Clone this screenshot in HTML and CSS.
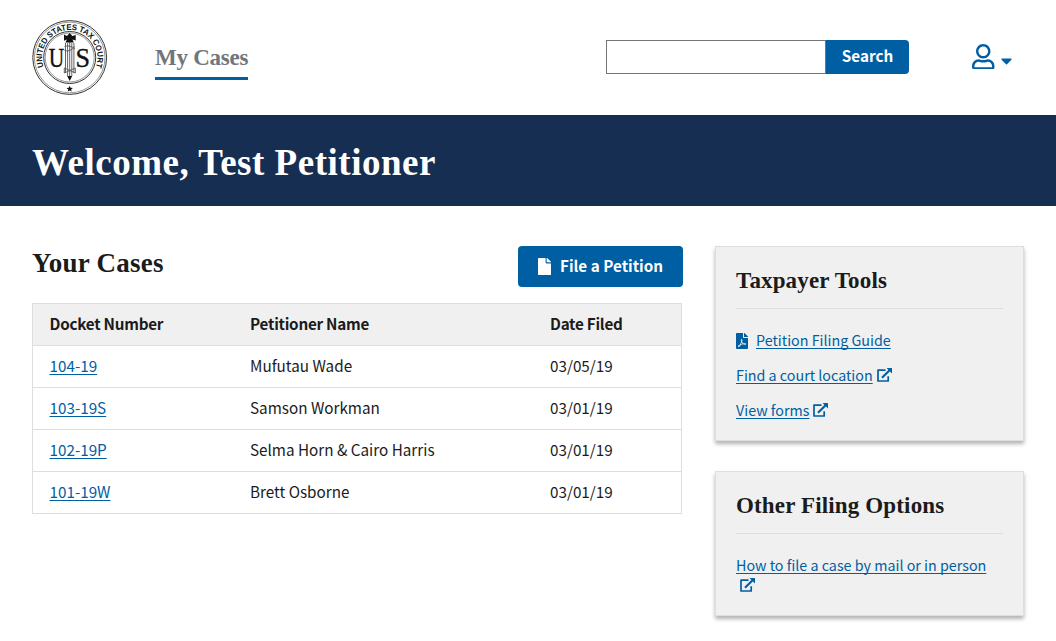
FILE: index.html
```html
<!DOCTYPE html>
<html lang="en">
<head>
<meta charset="utf-8">
<title>My Cases</title>
<link rel="stylesheet" href="styles.css">
</head>
<body>
<svg class="symbols" aria-hidden="true">
  <symbol id="external" viewBox="0 0 15 14">
    <path d="M8.500 2.200H1V13H11.200V8.300" fill="none" stroke="currentColor" stroke-width="1.700" stroke-linejoin="round"/>
    <path d="M5 9.800L12.600 2.200" fill="none" stroke="currentColor" stroke-width="2.100"/>
    <path d="M9.600 0H14.400Q15 0 15 .6V5.400Z" fill="currentColor"/>
  </symbol>
</svg>
<header class="header">
  <svg class="seal" viewBox="0 0 76 76" role="img" aria-label="United States Tax Court">
    <defs><path id="ring" d="M13.200 50.500A27.700 27.700 0 1 1 62.200 50.500"/></defs>
    <circle cx="37.700" cy="37.500" r="36.900" class="line"/>
    <circle cx="37.700" cy="37.500" r="35.300" class="line thin"/>
    <circle cx="37.700" cy="37.500" r="26" class="line"/>
    <circle cx="37.700" cy="37.500" r="24.500" class="line thin"/>
    <text class="motto"><textPath href="#ring" startOffset="4" textLength="106" lengthAdjust="spacingAndGlyphs">UNITED STATES TAX COURT</textPath></text>
    <text class="letter" x="16.800" y="47.200" textLength="15.500" lengthAdjust="spacingAndGlyphs">U</text>
    <text class="letter" x="43.400" y="47.200" textLength="14.500" lengthAdjust="spacingAndGlyphs">S</text>
    <path d="M33.500 23v30M35.600 23v33M37.700 20v39M39.800 23v33M41.900 23v30" class="rods"/>
    <path d="M32.500 26.500q5.200-2 10.400 2.500M42.900 26.500q-5.200 6-10.400 4M32.300 48l11 5M43.300 48l-11 5M32.300 48v5M43.300 48v5" class="rods"/>
    <path d="M32 14.500l3 1.500 2.700-3 2.700 3 3.300-1v5.500l-3.300-1 1.500 3h-8.500l1.500-3-2.900 1.200zM35.200 56h5l-2.500 5z"/>
    <path d="M37.700 65.700l.9 2.100 2.300.1-1.800 1.500.6 2.200-2-1.200-2 1.200.6-2.200-1.800-1.500 2.300-.1z"/>
  </svg>
  <nav class="nav"><a class="nav-link" href="#">My Cases</a></nav>
  <form class="search">
    <input class="search-input" type="text" aria-label="Search">
    <button class="search-button" type="button">Search</button>
  </form>
  <div class="account">
    <svg class="user" viewBox="0 0 448 512"><path d="M313.600 304c-28.700 0-42.500 16-89.600 16-47.100 0-60.800-16-89.600-16C60.200 304 0 364.200 0 438.400V464c0 26.500 21.500 48 48 48h352c26.500 0 48-21.500 48-48v-25.600c0-74.200-60.200-134.400-134.400-134.400zM400 464H48v-25.600c0-47.600 38.800-86.400 86.400-86.400 14.600 0 38.300 16 89.600 16 51.700 0 74.900-16 89.600-16 47.600 0 86.400 38.800 86.400 86.400V464zM224 288c79.500 0 144-64.500 144-144S303.500 0 224 0 80 64.500 80 144s64.500 144 144 144zm0-240c52.900 0 96 43.100 96 96s-43.100 96-96 96-96-43.100-96-96 43.100-96 96-96z"/></svg>
    <svg class="caret" viewBox="0 0 320 512"><path d="M31.300 192h257.300c17.800 0 26.700 21.500 14.100 34.100L174.100 354.800c-7.800 7.800-20.500 7.800-28.300 0L17.200 226.100C4.600 213.500 13.500 192 31.300 192z"/></svg>
  </div>
</header>
<div class="banner"><h1 class="banner-title">Welcome, Test Petitioner</h1></div>
<div class="content">
  <main class="main">
    <div class="main-head">
      <h2 class="main-title">Your Cases</h2>
      <button class="file-button" type="button">
        <svg class="file-icon" viewBox="0 0 384 512"><path d="M224 136V0H24C10.700 0 0 10.700 0 24v464c0 13.300 10.700 24 24 24h336c13.300 0 24-10.700 24-24V160H248c-13.200 0-24-10.800-24-24zm160-14.100v6.100H256V0h6.100c6.400 0 12.500 2.500 17 7l97.900 98c4.500 4.500 7 10.600 7 16.900z"/></svg>
        <span class="file-label">File a Petition</span>
      </button>
    </div>
    <table class="cases">
      <thead><tr><th class="docket">Docket Number</th><th class="name">Petitioner Name</th><th>Date Filed</th></tr></thead>
      <tbody>
        <tr><td><a class="link" href="#">104-19</a></td><td>Mufutau Wade</td><td>03/05/19</td></tr>
        <tr><td><a class="link" href="#">103-19S</a></td><td>Samson Workman</td><td>03/01/19</td></tr>
        <tr><td><a class="link" href="#">102-19P</a></td><td>Selma Horn &amp; Cairo Harris</td><td>03/01/19</td></tr>
        <tr><td><a class="link" href="#">101-19W</a></td><td>Brett Osborne</td><td>03/01/19</td></tr>
      </tbody>
    </table>
  </main>
  <aside class="aside">
    <section class="card">
      <h3 class="card-title">Taxpayer Tools</h3>
      <p class="item"><svg class="pdf" viewBox="0 0 384 512"><path d="M181.900 256.100c-5-16-4.900-46.900-2-46.900 8.400 0 7.600 36.900 2 46.900zm-1.700 47.200c-7.700 20.200-17.300 43.300-28.400 62.700 18.300-7 39-17.200 62.900-21.900-12.700-9.600-24.900-23.400-34.500-40.800zM86.100 428.100c0 .8 13.200-5.400 34.900-40.200-6.700 6.300-29.100 24.500-34.900 40.200zM248 160h136v328c0 13.300-10.700 24-24 24H24c-13.300 0-24-10.700-24-24V24C0 10.700 10.700 0 24 0h200v136c0 13.200 10.800 24 24 24zm-8 171.800c-20-12.200-33.300-29-42.700-53.800 4.500-18.500 11.600-46.600 6.200-64.200-4.700-29.400-42.400-26.500-47.800-6.800-5 18.300-.4 44.100 8.100 77-11.600 27.600-28.700 64.600-40.800 85.800-.1 0-.1.1-.2.1-27.100 13.900-73.600 44.500-54.500 68 5.600 6.900 16 10 21.500 10 17.900 0 35.700-18 61.100-61.800 25.800-8.500 54.100-19.100 79-23.200 21.700 11.800 47.100 19.500 64 19.500 29.200 0 31.200-32 19.700-43.400-13.900-13.600-54.300-9.700-73.600-7.200zM377 105L279 7c-4.500-4.500-10.600-7-17-7h-6v128h128v-6.100c0-6.300-2.500-12.400-7-16.900zm-74.100 255.300c4.100-2.700-2.500-11.900-42.800-9 37.100 15.800 42.800 9 42.800 9z"/></svg><a class="link" href="#">Petition Filing Guide</a></p>
      <p class="item"><a class="link" href="#">Find a court location</a><svg class="external"><use href="#external"/></svg></p>
      <p class="item"><a class="link" href="#">View forms</a><svg class="external"><use href="#external"/></svg></p>
    </section>
    <section class="card">
      <h3 class="card-title">Other Filing Options</h3>
      <p class="item"><a class="link" href="#">How to file a case by mail or in person</a> <svg class="external"><use href="#external"/></svg></p>
    </section>
  </aside>
</div>
</body>
</html>
```

FILE: styles.css
```css
* { box-sizing: border-box; }
body {
  margin: 0;
  background: #fff;
  color: #1b1b1b;
  font: 15.25px/20px "Source Sans Pro", "Noto Sans CJK SC", sans-serif;
}
h1, h2, h3, p { margin: 0; }
h1, h2, h3, .nav-link { font-family: "Source Serif Pro", "Liberation Serif", serif; font-weight: 700; }
svg { fill: currentColor; }
.symbols { display: none; }
.header { display: flex; align-items: flex-start; height: 115px; padding: 0 44px 0 32px; }
.seal { width: 76px; height: 76px; margin-top: 20px; color: #111; flex: none; }
.line { fill: none; stroke: #333; stroke-width: 1; }
.thin { stroke-width: .5; }
.rods { fill: none; stroke: #555; stroke-width: .9; }
.motto { font: 700 8.2px "Liberation Sans", sans-serif; }
.letter { font: 28px "Liberation Serif", serif; stroke: #111; stroke-width: .4; }
.nav { margin: 44px 0 0 47px; }
.nav-link {
  display: block;
  width: 93px;
  height: 36px;
  border-bottom: 3px solid #005ea2;
  color: #71767a;
  font-size: 23px;
  line-height: 28px;
  letter-spacing: -.25px;
  white-space: nowrap;
  text-decoration: none;
}
.search { display: flex; margin: 40px 0 0 auto; }
.search-input { width: 220px; height: 34px; border: 1px solid #71767a; border-radius: 0; padding: 0 8px; }
.search-button {
  width: 83px;
  height: 34px;
  border: 0;
  border-radius: 0 4px 4px 0;
  padding: 0 0 3px;
  background: #005ea2;
  color: #fff;
  font: 700 15.25px/31px "Source Sans Pro", "Noto Sans CJK SC", sans-serif;
}
.account { display: flex; align-items: center; margin: 43.500px 0 0 63px; color: #005ea2; }
.user { width: 22.500px; height: 25.700px; }
.caret { width: 11px; height: 17.600px; margin: 8px 0 0 6.500px; }
.banner { height: 91px; padding: 24px 32px; background: #162e51; color: #fff; }
.banner-title { font-size: 37px; line-height: 48px; letter-spacing: .52px; }
.content { display: flex; gap: 33px; padding: 40px 32px 0; }
.main { width: 650px; }
.main-head { display: flex; justify-content: space-between; margin: 0 -1px 16px 0; }
.main-title { font-size: 27px; line-height: 34px; letter-spacing: .25px; }
.file-button {
  display: flex;
  align-items: center;
  gap: 9px;
  width: 165px;
  height: 41px;
  border: 0;
  border-radius: 4px;
  padding: 0 0 0 20px;
  background: #005ea2;
  color: #fff;
  font: 700 15.25px/20px "Source Sans Pro", "Noto Sans CJK SC", sans-serif;
}
.file-icon { width: 13px; height: 17.300px; }
.file-label { padding-bottom: 3px; white-space: nowrap; }
.cases { width: 650px; border-collapse: collapse; table-layout: fixed; text-align: left; }
.cases tr { height: 42px; border: 1px solid #dcdee0; }
.cases thead { background: #f0f0f0; }
.cases th, .cases td { padding: 0 0 4px 16.500px; }
.cases th { letter-spacing: -.25px; }
.docket { width: 201px; }
.name { width: 300px; }
.link { color: #005ea2; text-decoration: underline; text-underline-offset: 2px; text-decoration-skip-ink: none; text-decoration-thickness: 1px; }
.aside { width: 309px; }
.card {
  margin-bottom: 30px;
  border: 1px solid #dcdee0;
  padding: 20px 20px 20px;
  background: #f0f0f0;
  box-shadow: 0 3px 4px rgba(0, 0, 0, .3);
}
.card-title { margin-bottom: 21px; border-bottom: 1px solid #dcdee0; padding-bottom: 13px; font-size: 23px; line-height: 28px; letter-spacing: .15px; }
.item { margin-bottom: 15px; color: #005ea2; font-size: 14.3px; }
.item:last-child { margin-bottom: 0; }
.pdf { width: 12px; height: 16px; margin-right: 8px; vertical-align: -3px; }
.external { width: 15px; height: 14px; margin-left: 4px; vertical-align: -1px; }
```
